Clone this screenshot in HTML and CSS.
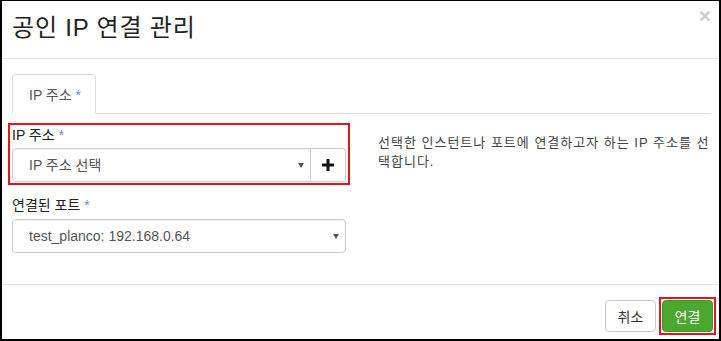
FILE: index.html
```html
<!DOCTYPE html>
<html lang="ko">
<head>
    <meta charset="UTF-8">
    <title>공인 IP 연결 관리</title>
    <link rel="stylesheet" href="styles.css">
</head>
<body>
    <div class="modal">
        <!-- Cabeçalho -->
        <div class="modal-header">
            <h3 class="modal-title">공인 IP 연결 관리</h3>
            <span class="close">&times;</span>
        </div>

        <div class="modal-body">
            <ul class="nav-tabs">
                <li class="tab active">IP 주소 <span class="req">*</span></li>
            </ul>

            <div class="tab-pane">
                <div class="col-left">
                    <div class="form-group marked">
                        <label>IP 주소 <span class="req">*</span></label>
                        <div class="input-group">
                            <div class="select">IP 주소 선택<span class="caret"></span></div>
                            <button class="btn-add">
                                <svg width="12" height="12" viewBox="0 0 12 12"><path d="M6 0v12M0 6h12" stroke="#111" stroke-width="3"/></svg>
                            </button>
                        </div>
                    </div>

                    <div class="form-group">
                        <label>연결된 포트 <span class="req">*</span></label>
                        <div class="select">test_planco: 192.168.0.64<span class="caret"></span></div>
                    </div>
                </div>

                <div class="col-right">
                    <p class="help">선택한 인스턴트나 포트에 연결하고자 하는 IP 주소를 선택합니다.</p>
                </div>
            </div>
        </div>

        <!-- Rodapé -->
        <div class="modal-footer">
            <button class="btn btn-default">취소</button>
            <div class="marked-btn">
                <button class="btn btn-primary">연결</button>
            </div>
        </div>
    </div>
</body>
</html>
```

FILE: styles.css
```css
/* Página */
body {
    margin: 0;
    background: #000;
    font-family: 'Liberation Sans', 'Noto Sans CJK KR', sans-serif;
    font-size: 14px;
    color: #333;
}

.modal {
    margin: 1px 2px 2px 2px;
    height: 338px;
    background: #fff;
    display: flex;
    flex-direction: column;
}

/* Cabeçalho */
.modal-header {
    height: 57px;
    border-bottom: 1px solid #e5e5e5;
    display: flex;
    justify-content: space-between;
    align-items: flex-start;
    padding: 0 8px 0 10px;
}

.modal-title {
    margin: 0;
    padding-top: 11px;
    font-size: 24px;
    font-weight: normal;
    line-height: 32px;
    letter-spacing: 0.8px;
    color: #222;
}

.close {
    margin-top: 3px;
    font-size: 21px;
    font-weight: bold;
    line-height: 24px;
    color: #000;
    opacity: 0.2;
}

/* Abas */
.modal-body {
    padding: 15px 8px 0 10px;
}

.nav-tabs {
    list-style: none;
    margin: 0;
    padding: 0;
    display: flex;
    border-bottom: 1px solid #ddd;
}

.tab {
    width: 66px;
    height: 38px;
    padding: 0 0 0 16px;
    border: 1px solid #ddd;
    border-bottom-color: #fff;
    border-radius: 4px 4px 0 0;
    margin-bottom: -1px;
    line-height: 40px;
    color: #555;
    background: #fff;
}

.req {
    color: #6d8fc4;
}

.tab-pane {
    display: flex;
    gap: 32px;
    margin-top: 9px;
}

.col-left {
    width: 334px;
    flex-shrink: 0;
}

.col-right {
    flex: 1;
    padding-top: 10px;
}

/* Formulário */
.form-group {
    margin-top: 10px;
}

.form-group.marked {
    margin: 0 -4px;
    padding: 0 2px 1px 2px;
    border: 2px solid #e3141f;
}

label {
    display: block;
    line-height: 20px;
    margin-bottom: 3px;
    color: #222;
}

.form-group:not(.marked) label {
    margin-bottom: 4px;
}

.input-group {
    display: flex;
}

.select {
    position: relative;
    height: 32px;
    line-height: 32px;
    padding-left: 16px;
    border: 1px solid #ccc;
    border-radius: 4px;
    color: #555;
    box-shadow: inset 0 1px 1px rgba(0, 0, 0, 0.06);
}

.input-group .select {
    flex: 1;
    border-radius: 4px 0 0 4px;
}

.caret {
    position: absolute;
    right: 6px;
    top: 14px;
    border-top: 5px solid #555;
    border-left: 3px solid transparent;
    border-right: 3px solid transparent;
}

.btn-add {
    width: 35px;
    height: 34px;
    border: 1px solid #ccc;
    border-left: none;
    border-radius: 0 4px 4px 0;
    background: #fff;
    padding: 0;
    display: flex;
    align-items: center;
    justify-content: center;
}

.help {
    margin: 0;
    line-height: 19px;
    font-size: 13px;
    letter-spacing: 1px;
    color: #444;
}

/* Rodapé */
.modal-footer {
    margin-top: auto;
    border-top: 1px solid #e5e5e5;
    padding: 12px 3px 4px 0;
    display: flex;
    justify-content: flex-end;
    align-items: center;
    gap: 3px;
}

.btn {
    height: 32px;
    padding: 0 10px;
    border-radius: 4px;
    font-family: inherit;
    font-size: 14px;
}

.btn-default {
    width: 51px;
    background: #fff;
    border: 1px solid #ccc;
    color: #333;
}

.marked-btn {
    border: 2px solid #e3141f;
    padding: 1px;
    display: flex;
}

.btn-primary {
    width: 51px;
    background: #4ba82e;
    border: 1px solid #3f9426;
    color: #fff;
}
```
